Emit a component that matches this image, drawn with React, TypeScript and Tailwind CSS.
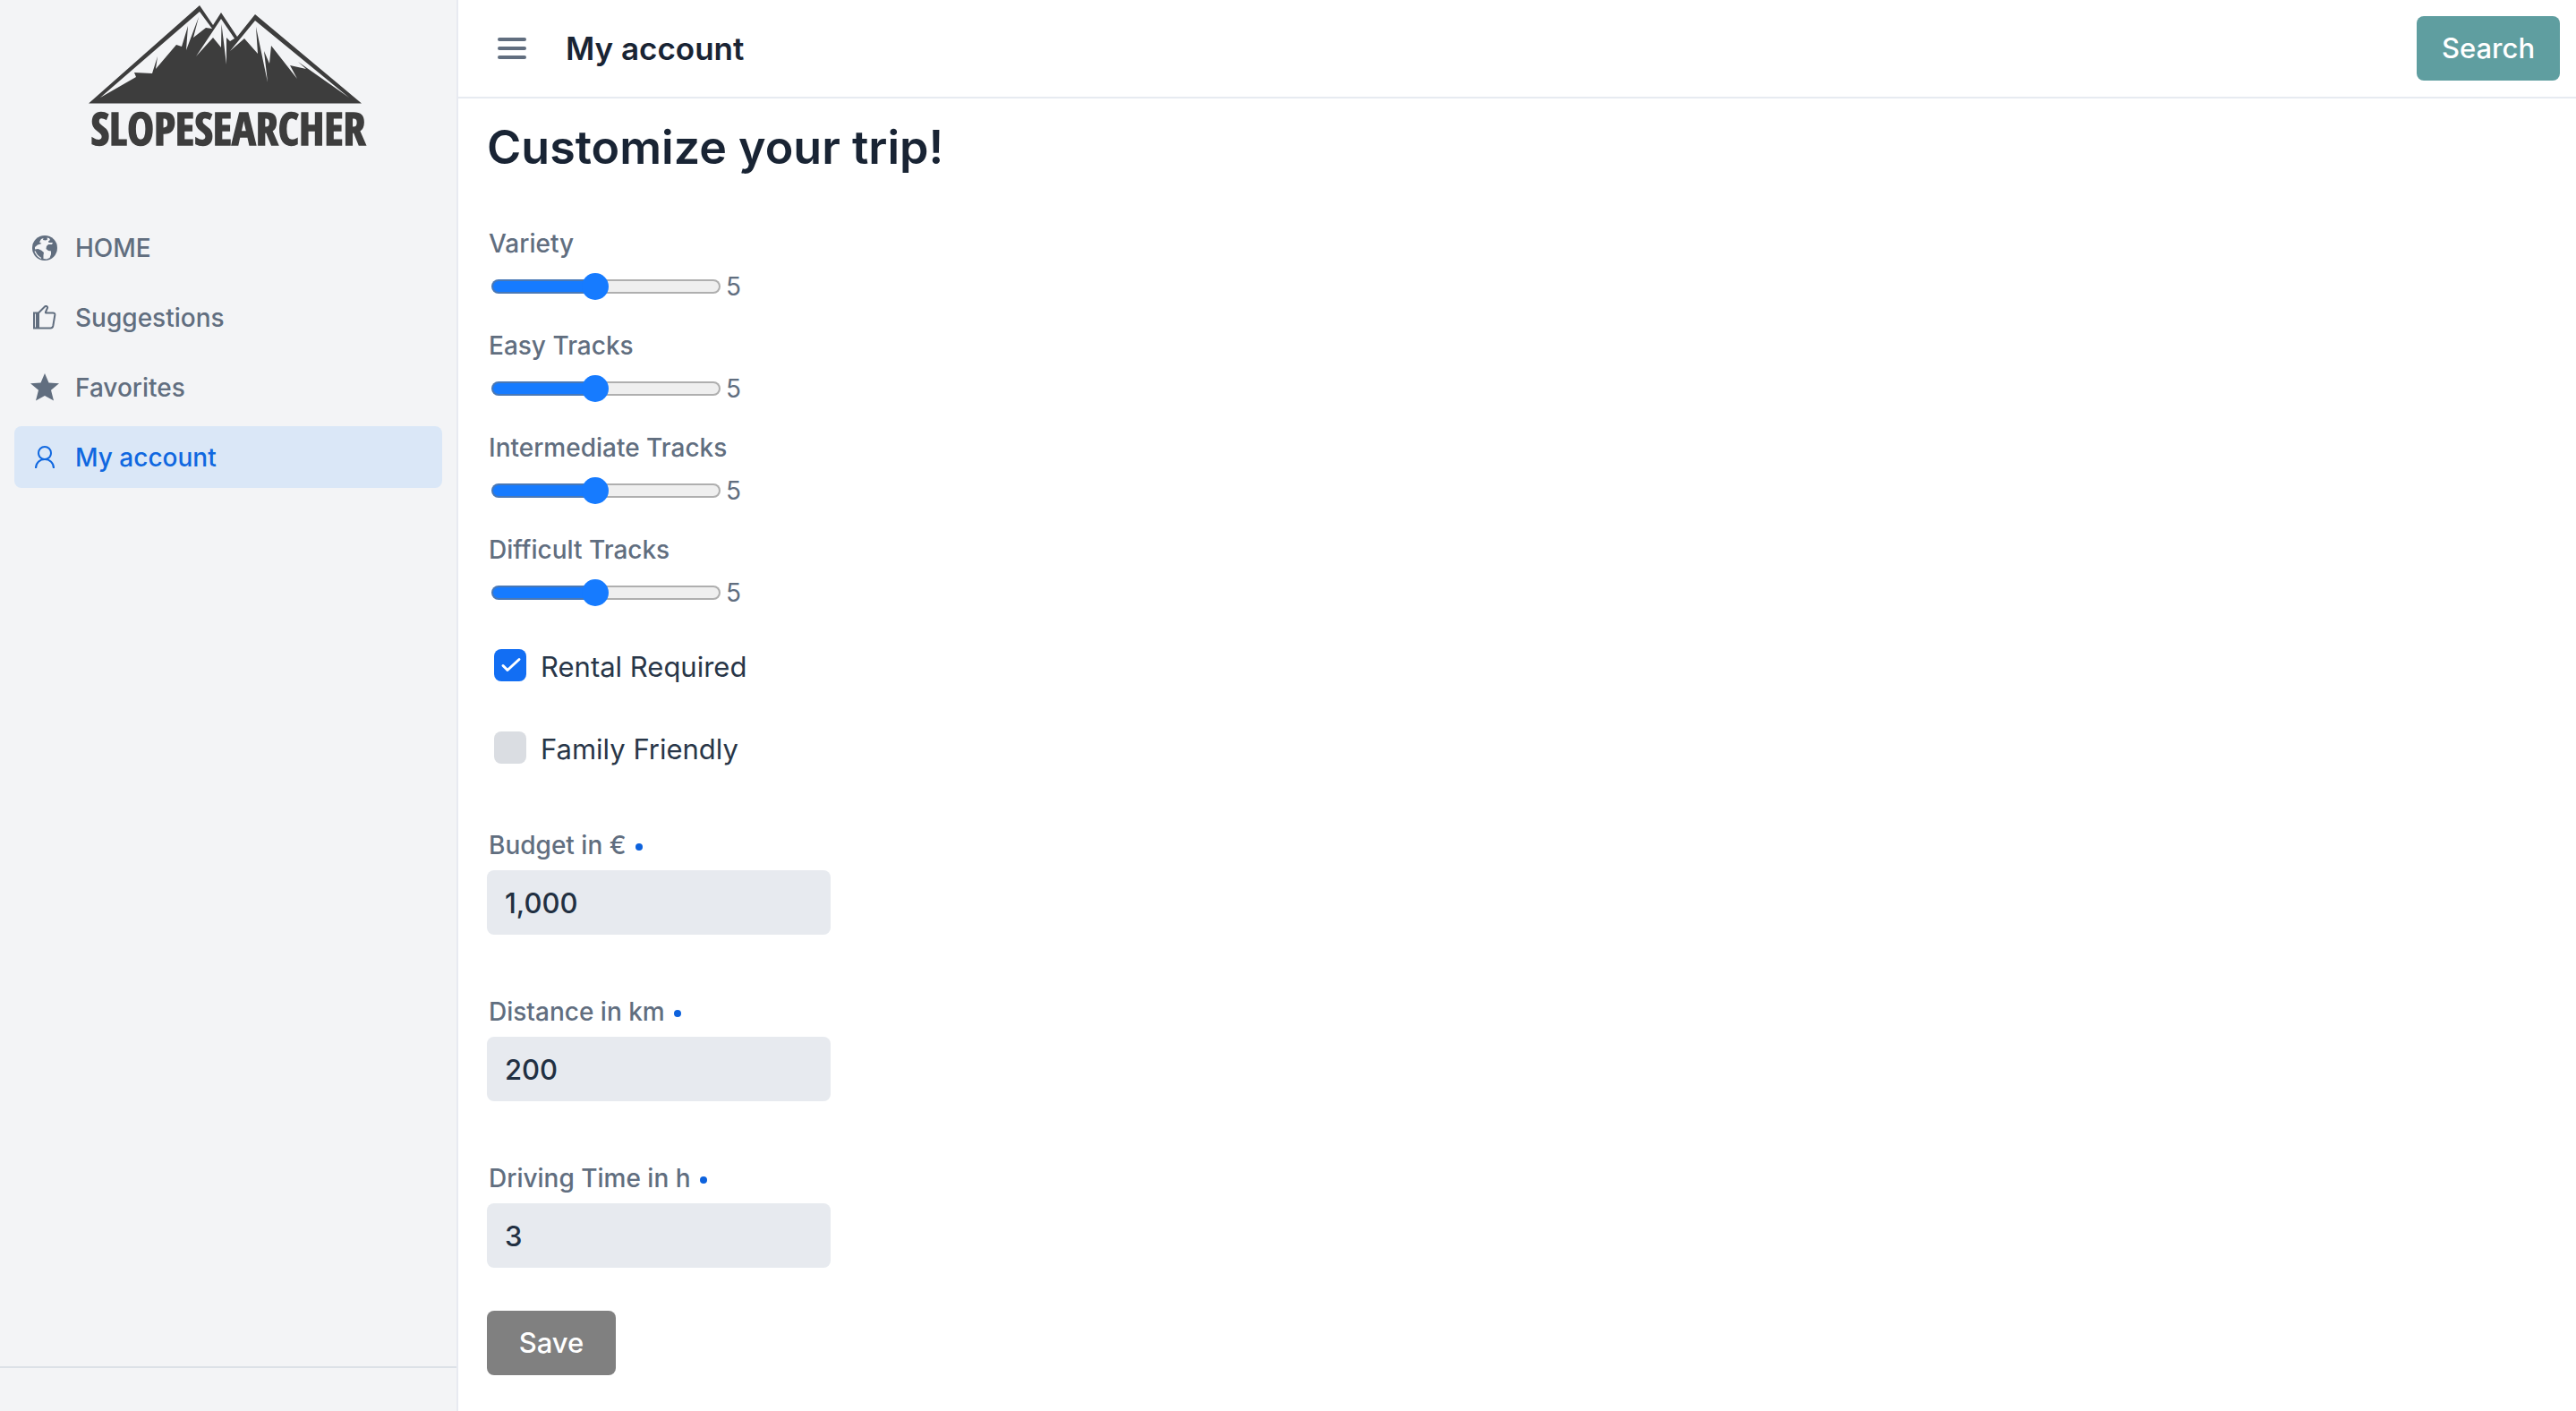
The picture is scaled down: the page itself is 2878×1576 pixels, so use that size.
import React, { useState } from "react";

const navClass =
  "flex h-[69px] items-center gap-5 rounded-lg pl-5 text-[28px] leading-9 font-medium";

function Logo() {
  return (
    <svg viewBox="0 0 316 176" className="block h-44 w-[316px]" role="img" aria-label="Slopesearcher">
      <path fill="#3d3d3d" d="M1 109.500 L125 0 L140 22 L149 8 L167 35 L187 10 L306 109.500 Z" />
      <g fill="#f3f4f6">
        <path d="M125 7 L139 26 L132 25 L118 36 L124 13 L110 50 L112 23 L105 46 L99 44 L76 71 L78 57 L72 76 L52 75 L54 80 L14 103 Z" />
        <path d="M149 15 L164 37 L159 40 L155 36 L155 66 L149.500 21 L149 47 L140 36 L121 57 Z" />
        <path d="M187 17 L292 103 L235 63 L244 71 L226 67 L234 82 L205 45 L203 65 L197 51 L201 86 L188 24 L190 54 L175 37 L159 51 Z" />
      </g>
      <text
        x="157"
        y="156"
        textAnchor="middle"
        fill="#3d3d3d"
        stroke="#3d3d3d"
        strokeWidth="1.500"
        className="font-['Open_Sans_Condensed','Open_Sans',sans-serif] text-[50px] font-extrabold"
      >
        SLOPESEARCHER
      </text>
    </svg>
  );
}

function GlobeIcon() {
  return (
    <svg viewBox="0 0 28 28" className="size-7 shrink-0" aria-hidden="true">
      <circle cx="14" cy="14" r="14" fill="currentColor" />
      <path
        fill="#f3f4f6"
        d="M3 13L6 10.500L10.500 9L8 7.500L10 4L12.500 3L12 5L15 5.500L17 4.500L16.500 2.500L19 3L20 5L18 6.500L18.500 8L23 8L22 10L18 10L16 12L15.500 15L18 17L21 17.500L21 21L19.500 25L16 26.500L12.500 26L12.500 22L13 19L10 16.500L6.500 15L3 15.500Z"
      />
      <path fill="none" stroke="#f3f4f6" strokeWidth="1.200" d="M3 17.500Q5 23 10 25.500" />
    </svg>
  );
}

function ThumbIcon() {
  return (
    <svg
      viewBox="0 0 28 28"
      className="size-7 shrink-0"
      fill="none"
      stroke="currentColor"
      strokeWidth="2"
      aria-hidden="true"
    >
      <path d="M2 8.500h5v17H2zM5 8.500v17M7 8.500l7-7c1.500-1.300 3.500-.3 3 1.500l-2 4.500c-.3.800 0 1 .8 1H23c2 0 2.500 1 2.300 2.500l-2 12c-.4 1.700-1 2.500-2.800 2.500H7" />
    </svg>
  );
}

function StarIcon() {
  return (
    <svg viewBox="0 0 32 32" className="-mx-0.5 size-8 shrink-0" fill="currentColor" aria-hidden="true">
      <path d="M16 0l4.500 10.500 11.500.8-9 7.400L26 30.500l-10-5.500-10 5.500 3-11.800-9-7.400 11.500-.8z" />
    </svg>
  );
}

function UserIcon() {
  return (
    <svg
      viewBox="0 0 28 28"
      className="size-7 shrink-0"
      fill="none"
      stroke="currentColor"
      strokeWidth="2"
      aria-hidden="true"
    >
      <circle cx="14" cy="9" r="7" />
      <path d="M4 26C4 20 8.500 16 14 16S24 20 24 26" />
    </svg>
  );
}

function SliderField({ id, label }: { id: string; label: string }) {
  const [value, setValue] = useState(5);
  const fill = { "--fill": `${((value - 1) / 9) * 100}%` } as React.CSSProperties;
  return (
    <div className="flex h-[114px] flex-col gap-3">
      <label htmlFor={id} className="pl-0.5 text-[28px] leading-9 font-medium">
        {label}
      </label>
      <div className="flex items-center gap-1.5 pl-[5px]">
        <input
          id={id}
          type="range"
          min={1}
          max={10}
          value={value}
          onChange={(e) => setValue(Number(e.target.value))}
          style={fill}
          className="h-[30px] w-64 appearance-none bg-transparent [&::-webkit-slider-runnable-track]:h-4 [&::-webkit-slider-runnable-track]:rounded-full [&::-webkit-slider-runnable-track]:border-2 [&::-webkit-slider-runnable-track]:border-[#77777788] [&::-webkit-slider-runnable-track]:bg-[linear-gradient(to_right,#167bff_var(--fill),#efefef_var(--fill))] [&::-webkit-slider-runnable-track]:bg-origin-border [&::-webkit-slider-thumb]:-mt-[9px] [&::-webkit-slider-thumb]:size-[30px] [&::-webkit-slider-thumb]:appearance-none [&::-webkit-slider-thumb]:rounded-full [&::-webkit-slider-thumb]:bg-[#167bff]"
        />
        <output htmlFor={id} className="text-[28px] leading-9">
          {value}
        </output>
      </div>
    </div>
  );
}

function CheckField({ label, checked }: { label: string; checked?: boolean }) {
  return (
    <label className="flex h-9 items-center gap-4 pl-2 text-[31px] leading-9 text-[#283648]">
      <span className="relative size-9 shrink-0">
        <input
          type="checkbox"
          defaultChecked={checked}
          className="peer block size-9 appearance-none rounded-lg bg-[#dadde2] checked:bg-[#126ef3]"
        />
        <svg
          viewBox="0 0 36 36"
          className="pointer-events-none absolute inset-0 hidden size-9 peer-checked:block"
          fill="none"
          stroke="#fff"
          strokeWidth="3"
          strokeLinecap="round"
          strokeLinejoin="round"
          aria-hidden="true"
        >
          <path d="M10 18.500l5 5L28 11.500" />
        </svg>
      </span>
      <span className="pt-[3px]">{label}</span>
    </label>
  );
}

function NumberField({ id, label, value }: { id: string; label: string; value: string }) {
  return (
    <div className="flex flex-col gap-2.5">
      <label htmlFor={id} className="flex items-center gap-2.5 pl-0.5 text-[28px] leading-9 font-medium">
        {label}
        <span className="mt-1 size-2 rounded-full bg-[#0d62dd]" />
      </label>
      <input
        id={id}
        type="text"
        inputMode="numeric"
        required
        defaultValue={value}
        className="h-[72px] w-96 rounded-lg bg-[#e7eaef] px-5 text-[31px] leading-10 font-medium text-[#223042]"
      />
    </div>
  );
}

export default function App() {
  return (
    <div className="flex min-h-screen bg-white font-['Inter','Liberation_Sans',sans-serif] text-[#616e7f]">
      <aside className="flex w-[512px] shrink-0 flex-col border-r-2 border-[#e8eaf1] bg-[#f3f4f6]">
        <div className="pt-1.5 pl-[98px]">
          <Logo />
        </div>
        <nav className="mt-[60px] flex flex-1 flex-col gap-[9px] px-4">
          <a href="#home" className={navClass}>
            <GlobeIcon />
            HOME
          </a>
          <a href="#suggestions" className={navClass}>
            <ThumbIcon />
            Suggestions
          </a>
          <a href="#favorites" className={navClass}>
            <StarIcon />
            Favorites
          </a>
          <a
            href="#account"
            aria-current="page"
            className="flex h-[69px] items-center gap-5 rounded-lg bg-[#dae7f7] pl-5 text-[28px] leading-9 font-medium text-[#1068e0]"
          >
            <UserIcon />
            My account
          </a>
        </nav>
        <footer className="h-[50px] border-t-2 border-[#dce1e7]" />
      </aside>
      <div className="flex min-w-0 flex-1 flex-col">
        <header className="flex h-[110px] items-center justify-between border-b-2 border-[#e7ebf1] pr-[18px] pl-11">
          <div className="flex items-center gap-11">
            <button type="button" aria-label="Menu" className="flex w-8 flex-col gap-1.5">
              <span className="h-1 rounded-full bg-[#616e7f]" />
              <span className="h-1 rounded-full bg-[#616e7f]" />
              <span className="h-1 rounded-full bg-[#616e7f]" />
            </button>
            <h1 className="text-[35px] leading-11 font-semibold text-[#192434]">My account</h1>
          </div>
          <button
            type="button"
            className="h-[72px] w-40 rounded-lg bg-[#5f9ea0] text-[31px] leading-10 font-medium text-white"
          >
            Search
          </button>
        </header>
        <main className="flex flex-col items-start px-8 pt-5">
          <h2 className="text-[52px] leading-[70px] font-semibold text-[#192434]">Customize your trip!</h2>
          <form className="mt-[54px] flex flex-col items-start">
            <SliderField id="variety" label="Variety" />
            <SliderField id="easy" label="Easy Tracks" />
            <SliderField id="intermediate" label="Intermediate Tracks" />
            <SliderField id="difficult" label="Difficult Tracks" />
            <div className="mt-[15px] flex flex-col gap-14">
              <CheckField label="Rental Required" checked />
              <CheckField label="Family Friendly" />
            </div>
            <div className="mt-[73px] flex flex-col gap-[68px]">
              <NumberField id="budget" label="Budget in €" value="1,000" />
              <NumberField id="distance" label="Distance in km" value="200" />
              <NumberField id="driving" label="Driving Time in h" value="3" />
            </div>
            <button
              type="button"
              className="mt-12 h-[72px] w-36 rounded-lg bg-[#808080] text-[31px] leading-10 font-medium text-white"
            >
              Save
            </button>
          </form>
        </main>
      </div>
    </div>
  );
}
